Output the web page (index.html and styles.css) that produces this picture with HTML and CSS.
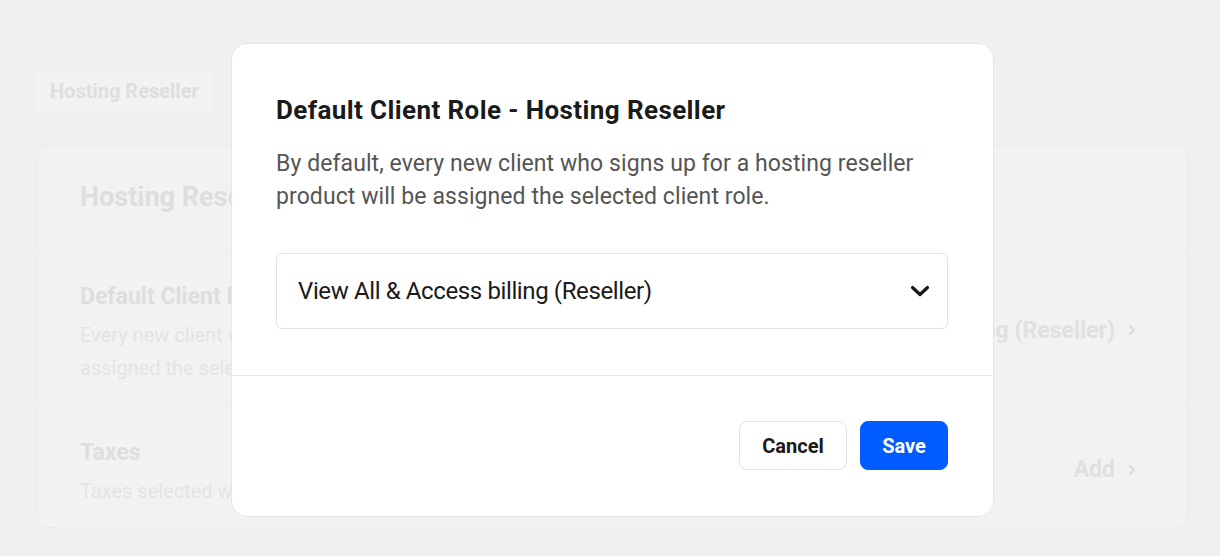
FILE: index.html
```html
<!DOCTYPE html>
<html lang="en">
<head>
<meta charset="utf-8">
<title>Default Client Role</title>
<link rel="stylesheet" href="styles.css">
</head>
<body>
<div class="page">
  <div class="tag">Hosting Reseller</div>
  <div class="card">
    <div class="card-head">Hosting Reseller</div>
    <div class="row">
      <div class="row-text">
        <div class="row-title">Default Client Role</div>
        <div class="row-desc">Every new client who signs up for a hosting reseller product will be<br>assigned the selected client role.</div>
      </div>
      <div class="row-value">View All &amp; Access billing (Reseller)
        <svg class="row-chev" viewBox="0 0 10 14" width="10" height="14"><path d="M3 3l4 4-4 4" fill="none" stroke="currentColor" stroke-width="2.2" stroke-linecap="round" stroke-linejoin="round"/></svg>
      </div>
    </div>
    <div class="row row-last">
      <div class="row-text">
        <div class="row-title">Taxes</div>
        <div class="row-desc">Taxes selected will be applied to hosting reseller products.</div>
      </div>
      <div class="row-value">Add
        <svg class="row-chev" viewBox="0 0 10 14" width="10" height="14"><path d="M3 3l4 4-4 4" fill="none" stroke="currentColor" stroke-width="2.2" stroke-linecap="round" stroke-linejoin="round"/></svg>
      </div>
    </div>
  </div>
</div>

<div class="overlay">
  <div class="modal">
    <div class="modal-body">
      <h2 class="modal-title">Default Client Role - Hosting Reseller</h2>
      <p class="modal-desc">By default, every new client who signs up for a hosting reseller product will be assigned the selected client role.</p>
      <div class="select">
        <span class="select-value">View All &amp; Access billing (Reseller)</span>
        <svg class="select-chev" viewBox="0 0 20 12" width="20" height="12"><path d="M2.5 2.5l7.5 7 7.5-7" fill="none" stroke="#1a1a1a" stroke-width="3.2" stroke-linecap="round" stroke-linejoin="round"/></svg>
      </div>
    </div>
    <div class="modal-foot">
      <button class="btn btn-cancel" type="button">Cancel</button>
      <button class="btn btn-save" type="button">Save</button>
    </div>
  </div>
</div>
</body>
</html>
```

FILE: styles.css
```css
* { box-sizing: border-box; }
html, body { margin: 0; padding: 0; }
body {
  background: #f0f0f0;
  font-family: Roboto, "Liberation Sans", Arial, sans-serif;
  width: 1220px;
  height: 556px;
  overflow: hidden;
}
.page {
  padding: 70px 32px 0 37px;
}
.tag {
  display: inline-block;
  width: 176px;
  height: 43px;
  line-height: 43px;
  padding-left: 13px;
  background: #f2f2f2;
  border-radius: 4px;
  font-size: 20px;
  font-weight: 700;
  color: #dedede;
}
.card {
  margin-top: 32px;
  width: 1151px;
  background: #f2f2f2;
  border: 1px solid #ececec;
  border-radius: 12px;
}
.card-head {
  height: 105px;
  display: flex;
  align-items: center;
  padding-left: 42px;
  padding-bottom: 3px;
  font-size: 27px;
  font-weight: 700;
  color: #dedede;
}
.row {
  display: flex;
  justify-content: space-between;
  align-items: center;
  border-top: 1px solid #ededed;
  padding: 29px 50px 20px 42px;
}
.row-last { padding-top: 31px; padding-bottom: 19px; }
.row-title {
  font-size: 23px;
  line-height: 32px;
  font-weight: 700;
  color: #dedede;
}
.row-desc {
  margin-top: 6px;
  font-size: 20px;
  line-height: 33px;
  color: #e4e4e4;
}
.row-value {
  display: flex;
  align-items: center;
  gap: 12px;
  margin-bottom: 6px;
  font-size: 23px;
  font-weight: 700;
  color: #e0e0e0;
}
.row-chev { color: #dcdcdc; }

.overlay {
  position: fixed;
  inset: 0;
  padding: 43px 0 0 231px;
}
.modal {
  width: 763px;
  background: #ffffff;
  border: 1px solid #e6e6e6;
  border-radius: 16px;
}
.modal-body {
  padding: 50px 45px 46px 44px;
  border-bottom: 1px solid #e6e6e6;
}
.modal-title {
  margin: 0;
  font-size: 26px;
  line-height: 32px;
  font-weight: 700;
  color: #1a1a1a;
  letter-spacing: 0.4px;
}
.modal-desc {
  margin: 21px 0 0;
  font-size: 23px;
  line-height: 33px;
  color: #555555;
  letter-spacing: 0.08px;
  padding-right: 10px;
}
.select {
  margin-top: 40px;
  height: 76px;
  border: 1px solid #e3e3e3;
  border-radius: 6px;
  display: flex;
  align-items: center;
  justify-content: space-between;
  padding: 0 17px 0 21px;
}
.select-value {
  font-size: 24px;
  color: #1a1a1a;
  letter-spacing: -0.38px;
}
.modal-foot {
  display: flex;
  justify-content: flex-end;
  gap: 13px;
  padding: 45px 45px 46px 45px;
}
.btn {
  font-family: Roboto, "Liberation Sans", Arial, sans-serif;
  font-size: 20px;
  font-weight: 700;
  height: 49px;
  border-radius: 8px;
  cursor: pointer;
}
.btn-cancel {
  width: 108px;
  background: #ffffff;
  border: 1px solid #e2e2e2;
  color: #1a1a1a;
}
.btn-save {
  width: 88px;
  background: #005cff;
  border: 1px solid #005cff;
  color: #ffffff;
}
```
